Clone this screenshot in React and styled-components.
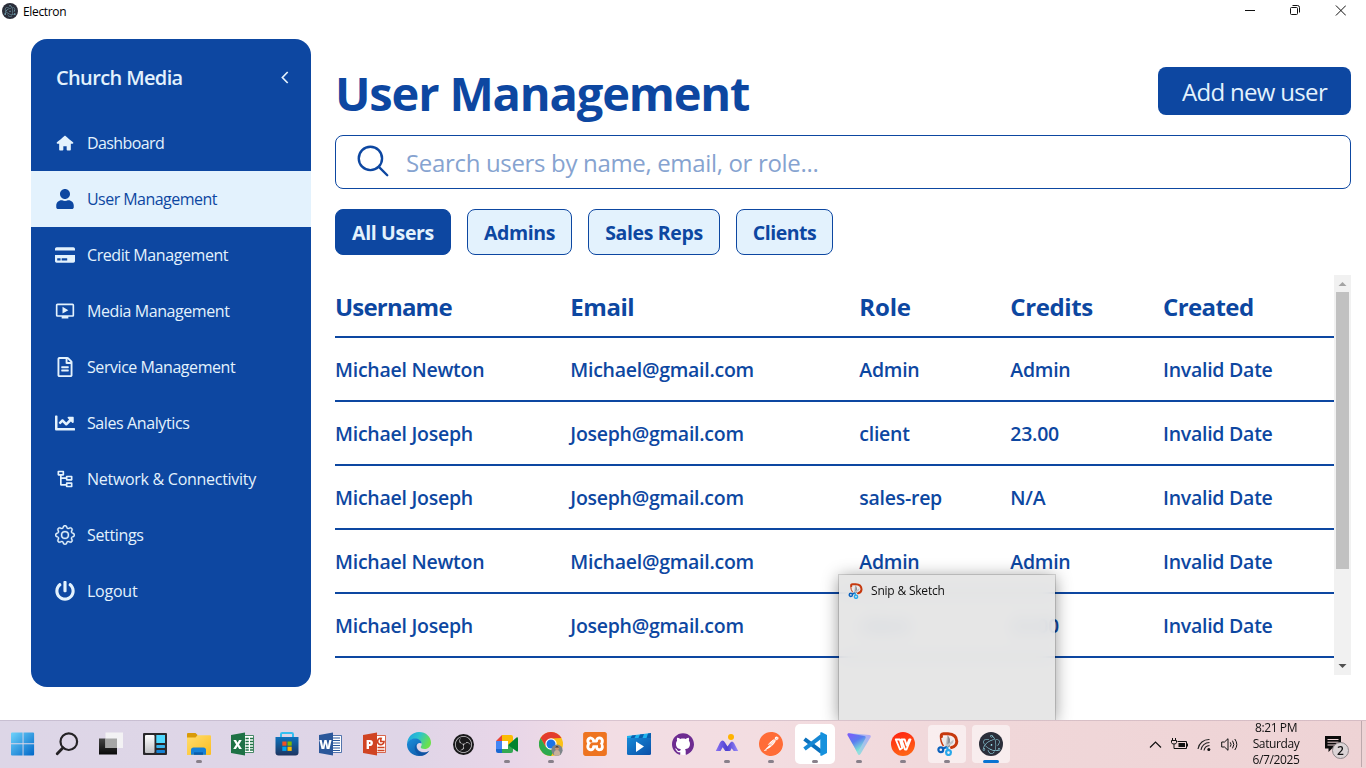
import React from "react";
import styled, { createGlobalStyle } from "styled-components";
import { TiHome } from "react-icons/ti";
import { FaUser, FaCreditCard, FaRegFileAlt, FaChartLine, FaPowerOff } from "react-icons/fa";
import { MdOndemandVideo } from "react-icons/md";
import { RiNodeTree } from "react-icons/ri";
import { BsGear } from "react-icons/bs";
import { IoSearchOutline } from "react-icons/io5";
import { SiObsstudio, SiGithub, SiPostman, SiElectron, SiXampp } from "react-icons/si";

const NAVY = "#0d47a1";
const PALE = "#e3f2fd";

const GlobalStyle = createGlobalStyle`
  * { box-sizing: border-box; }
  body {
    margin: 0;
    background: #fff;
    font-family: "Segoe UI", "Open Sans", "Noto Sans", sans-serif;
  }
  svg { display: block; flex: none; }
`;

const Desktop = styled.div`
  position: relative;
  display: flex;
  flex-direction: column;
  width: 1366px;
  height: 768px;
  overflow: hidden;
`;

/* Window title bar */
const TitleBar = styled.header`
  display: flex;
  align-items: flex-start;
  height: 39px;
  padding: 3px 20px 0 2px;
`;
const ElectronBadge = styled.span`
  display: flex;
  align-items: center;
  justify-content: center;
  width: ${(p) => p.$size}px;
  height: ${(p) => p.$size}px;
  border-radius: 50%;
  background: #2b2e3a;
  color: #9feaf9;
`;
const WindowTitle = styled.span`
  margin-left: 5px;
  font-size: 12px;
  line-height: 18px;
  letter-spacing: -0.35px;
  color: #000;
`;
const WindowControls = styled.div`
  display: flex;
  gap: 35px;
  margin: 2px 0 0 auto;
`;

const Body = styled.div`
  display: flex;
  height: 681px;
  padding: 0 15px 0 31px;
`;

/* Sidebar */
const Sidebar = styled.nav`
  flex: none;
  width: 280px;
  height: 648px;
  border-radius: 16px;
  background: ${NAVY};
  color: ${PALE};
`;
const Brand = styled.div`
  display: flex;
  align-items: center;
  justify-content: space-between;
  height: 77px;
  margin-bottom: -1px;
  padding: 0 19px 0 25px;
  font-size: 20px;
  font-weight: 600;
  letter-spacing: -0.63px;
`;
const MenuItem = styled.a`
  display: flex;
  align-items: center;
  gap: 12px;
  height: 56px;
  padding: 0 24px;
  font-size: 16px;
  white-space: nowrap;
  letter-spacing: ${(p) => p.$track}px;
  color: ${(p) => (p.$active ? NAVY : PALE)};
  background: ${(p) => (p.$active ? PALE : "transparent")};
  svg { width: 20px; height: 20px; }
`;
const GearIcon = styled(BsGear)`
  path { stroke: currentColor; stroke-width: 0.25px; }
`;

/* Main panel */
const Main = styled.main`
  flex: 1;
  min-width: 0;
  margin-left: 24px;
  padding-top: 28px;
  color: ${NAVY};
`;
const PageHeader = styled.div`
  display: flex;
  justify-content: space-between;
  height: 48px;
`;
const PageTitle = styled.h1`
  margin: 0;
  font-size: 47px;
  line-height: 53px;
  font-weight: 700;
  letter-spacing: -1.16px;
  white-space: nowrap;
`;
const PrimaryButton = styled.button`
  width: 193px;
  height: 48px;
  padding: 1px 0 0;
  border: 0;
  border-radius: 8px;
  background: ${NAVY};
  color: ${PALE};
  font: 400 24px/47px "Segoe UI", "Open Sans", sans-serif;
  letter-spacing: -0.68px;
`;
const SearchBox = styled.div`
  display: flex;
  align-items: center;
  height: 54px;
  margin-top: 20px;
  padding: 0 18px 2px;
  border: 1px solid ${NAVY};
  border-radius: 8px;
`;
const Placeholder = styled.span`
  margin: 3px 0 0 14px;
  font-size: 24px;
  line-height: 40px;
  letter-spacing: -0.33px;
  color: #86a3d0;
`;
const Filters = styled.div`
  display: flex;
  gap: 16px;
  margin-top: 20px;
`;
const FilterButton = styled.button`
  width: ${(p) => p.$width}px;
  height: 46px;
  padding: 2px 0 0;
  border: 1px solid ${NAVY};
  border-radius: 8px;
  background: ${(p) => (p.$active ? NAVY : PALE)};
  color: ${(p) => (p.$active ? PALE : NAVY)};
  font: 700 19.5px/42px "Segoe UI", "Open Sans", sans-serif;
  letter-spacing: ${(p) => p.$track}px;
`;
const TableArea = styled.div`
  display: flex;
  height: 400px;
  margin-top: 20px;
  overflow: hidden;
`;
const Table = styled.div`
  flex: 1;
`;
const Row = styled.div`
  display: grid;
  grid-template-columns: 235.3px 289px 151px 152.7px 1fr;
  align-items: center;
  height: 64px;
  border-bottom: 2px solid ${NAVY};
  font-size: 19.5px;
  font-weight: 600;
  letter-spacing: -0.26px;
  white-space: nowrap;
`;
const HeadRow = styled(Row)`
  height: 63px;
  padding-top: 2px;
  font-size: 24px;
  font-weight: 700;
`;
const HeadCell = styled.span`
  letter-spacing: ${(p) => p.$track}px;
`;
const ScrollTrack = styled.div`
  display: flex;
  flex-direction: column;
  align-items: center;
  width: 17px;
  background: #f1f1f1;
`;
const ScrollThumb = styled.div`
  width: 13px;
  height: 277px;
  background: #c1c1c1;
`;
const Spacer = styled.div`
  flex: 1;
`;

/* Window preview floating above the taskbar */
const Preview = styled.div`
  position: absolute;
  left: 839px;
  top: 575px;
  width: 216px;
  height: 145px;
  padding: 8px 8px;
  display: flex;
  align-items: flex-start;
  gap: 8px;
  background: rgba(227, 227, 227, 0.9);
  backdrop-filter: blur(8px);
  box-shadow: 0 0 0 1px rgba(0, 0, 0, 0.14), 0 2px 16px rgba(0, 0, 0, 0.42);
  font-size: 12px;
  line-height: 16px;
  letter-spacing: -0.2px;
  color: #111;
`;

/* Taskbar */
const Taskbar = styled.footer`
  position: relative;
  z-index: 1;
  display: flex;
  align-items: center;
  height: 48px;
  padding: 0 0 1px 3px;
  border-top: 1px solid rgba(120, 100, 130, 0.2);
  background: linear-gradient(90deg, #ddd6e7 0, #dfd5e7 400px, #e8d6e8 510px, #f2dde4 610px, #f3dde1 760px, #f0d7d9 1000px, #eed3d5 1366px);
`;
const Apps = styled.div`
  display: flex;
  gap: 4px;
`;
const AppSlot = styled.div`
  position: relative;
  display: flex;
  align-items: center;
  justify-content: center;
  width: 40px;
  height: 40px;
  border: ${(p) => (p.$box === "soft" ? "1px solid transparent" : "0")};
  border-radius: 5px;
  background: ${(p) => (p.$box === "solid" ? "#fff" : p.$box === "soft" ? "rgba(255,255,255,.55)" : "transparent")};
  background-clip: padding-box;
  &::after {
    content: "";
    display: ${(p) => (p.$mark ? "block" : "none")};
    position: absolute;
    bottom: ${(p) => (p.$box === "soft" ? 0 : 1)}px;
    width: ${(p) => (p.$mark === "current" ? 16 : 6)}px;
    height: 3px;
    border-radius: 2px;
    background: ${(p) => (p.$mark === "current" ? "#0873d2" : "#88808a")};
  }
`;
const Disc = styled.span`
  display: flex;
  align-items: center;
  justify-content: center;
  width: ${(p) => p.$size}px;
  height: ${(p) => p.$size}px;
  border-radius: ${(p) => p.$radius || "50%"};
  background: ${(p) => p.$bg};
  color: ${(p) => p.$fg};
`;
const Tray = styled.div`
  display: flex;
  align-items: center;
  height: 46px;
  margin-left: auto;
`;
const TrayIcons = styled.div`
  display: flex;
  align-items: center;
  gap: 9px;
`;
const Clock = styled.div`
  width: 60px;
  margin-left: 8px;
  text-align: center;
  font-size: 12px;
  line-height: 16px;
  letter-spacing: -0.4px;
  color: #111;
`;
const Notifications = styled.div`
  position: relative;
  width: 36px;
  height: 32px;
  margin-left: 19px;
  padding-top: 8px;
`;
const Count = styled.span`
  position: absolute;
  left: 7px;
  top: 14px;
  width: 17px;
  height: 17px;
  border: 1px solid #8d8588;
  border-radius: 50%;
  background: #dcd4d6;
  font-size: 12px;
  font-weight: 600;
  line-height: 15px;
  text-align: center;
  color: #111;
`;
const ShowDesktop = styled.div`
  width: 5px;
  height: 46px;
  border-left: 1px solid #bda9ad;
`;

const Svg = ({ size = 24, box = 24, children }) => (
  <svg width={size} height={size} viewBox={`0 0 ${box} ${box}`} fill="none">{children}</svg>
);

const StartIcon = () => (
  <Svg>
    <defs><linearGradient id="win" x1="0" y1="0" x2="1" y2="1"><stop stopColor="#6fd3fb" /><stop offset="1" stopColor="#0067c8" /></linearGradient></defs>
    <path fill="url(#win)" d="M1 .500h10.600v10.800H0V1.500a1 1 0 0 1 1-1zM12.500.500h9.600a1 1 0 0 1 1 1v9.800H12.500zM0 12.300h11.600v11.200H1a1 1 0 0 1-1-1zM12.500 12.300h10.600v10.200a1 1 0 0 1-1 1H12.500z" />
  </Svg>
);
const FindIcon = () => (
  <Svg>
    <circle cx="13.8" cy="9.7" r="8.3" stroke="#242225" strokeWidth="2.2" />
    <path d="M8 15.8 2.2 21.8" stroke="#242225" strokeWidth="2.8" strokeLinecap="round" />
  </Svg>
);
const TaskViewIcon = () => (
  <Svg>
    <defs><linearGradient id="tv" x1="0" y1="0" x2="0" y2="1"><stop stopColor="#454545" /><stop offset="1" stopColor="#080808" /></linearGradient></defs>
    <rect x="0" y="6.5" width="18" height="16" fill="url(#tv)" />
    <rect x="6.5" y=".5" width="17.5" height="15.5" fill="#f3f2f4" />
    <rect x="6.5" y="6.5" width="11.5" height="9.5" fill="#a6a6a6" />
  </Svg>
);
const WidgetsIcon = () => (
  <Svg>
    <defs><linearGradient id="wd" x1="0" y1="0" x2="0" y2="1"><stop stopColor="#fff" /><stop offset="1" stopColor="#c0c0c4" /></linearGradient></defs>
    <rect y="1" width="24" height="22" rx="1" fill="#29282b" />
    <rect x="2" y="3" width="9.5" height="18" rx="1" fill="url(#wd)" />
    <rect x="13.3" y="3" width="8.7" height="8" fill="#50d9ff" />
    <rect x="13.3" y="13" width="8.7" height="3" rx=".8" fill="#37b5ee" />
    <rect x="13.3" y="18" width="8.7" height="3" rx=".8" fill="#1683d4" />
  </Svg>
);
const FolderIcon = () => (
  <Svg>
    <defs><linearGradient id="fd" x1="0" y1="0" x2="1" y2="1"><stop stopColor="#ffdd6e" /><stop offset="1" stopColor="#fcbd20" /></linearGradient></defs>
    <path fill="#d99a08" d="M0 2q0-1 1-1h7.5l2 2v4H0z" />
    <path fill="url(#fd)" d="M0 5.5h8.5l2-2.3H23q1 0 1 1V22q0 1-1 1H0z" />
    <path fill="#1681d8" d="M4 22.8V18q0-2.5 2.5-2.5h10Q19 15.500 19 18v4.800z" />
    <path fill="#0a5cab" d="M7 22.8v-2.500h9v2.500z" />
  </Svg>
);
const OfficeIcon = ({ color, letter, children }) => (
  <Svg>
    <path fill="#fff" stroke={color} strokeWidth=".8" d="M11 3.500h11.500v17H11z" />
    {children}
    <path fill={color} d="M0 3 14 .500v23L0 21z" />
    <text x="6.500" y="16.500" fill="#fff" fontFamily="Open Sans, sans-serif" fontSize="12" fontWeight="800" textAnchor="middle">{letter}</text>
  </Svg>
);
const StoreIcon = () => (
  <Svg>
    <defs><linearGradient id="st" x1="0" y1="0" x2="0" y2="1"><stop stopColor="#0d72bd" /><stop offset="1" stopColor="#1e3560" /></linearGradient></defs>
    <path d="M6 6V2.200Q6 1 7.200 1h9.600Q18 1 18 2.200V6" stroke="#35bff0" strokeWidth="2" />
    <path fill="url(#st)" d="M.500 5h23v15.500q0 3-3 3h-17q-3 0-3-3z" />
    <path fill="#f25022" d="M7.300 9.500h4.200v4.200H7.300z" /><path fill="#7fba00" d="M12.500 9.500h4.200v4.200h-4.200z" />
    <path fill="#00a4ef" d="M7.300 14.700h4.200v4.200H7.300z" /><path fill="#ffb900" d="M12.500 14.700h4.200v4.200h-4.200z" />
  </Svg>
);
const EdgeIcon = () => (
  <Svg>
    <defs>
      <linearGradient id="eg" x1="0" y1="0" x2="1" y2=".4"><stop stopColor="#1f9de0" /><stop offset=".5" stopColor="#2bc3d0" /><stop offset="1" stopColor="#6be04c" /></linearGradient>
      <linearGradient id="eb" x1="0" y1="0" x2="1" y2="1"><stop stopColor="#1b8fdc" /><stop offset="1" stopColor="#0d4f9e" /></linearGradient>
    </defs>
    <path fill="url(#eg)" d="M0 11.500C.600 5 5.500 0 12 0c7 0 12 5 12 10.500 0 4-3 6.500-6.300 6.500-2.700 0-4.200-1-4-2 .1-.6 1-1.200 1-3 0-2.400-2.600-5-6.200-5C4.500 7 1.400 9 0 11.500z" />
    <path fill="url(#eb)" d="M0 12c.5-3 4-5.500 8-5.500 3.500 0 6.500 2 6.700 5C12 10 9.500 12 9.500 14.500c0 4 4.500 6.500 8.500 6 2-.3 3.500-1.200 4.300-1.800C20 22 16.500 24 12 24 5 24-.3 18.500 0 12z" />
    <path fill="#0c4d9d" opacity=".6" d="M9.500 11.500c-4 4-1 11.500 5 12.200 3.500-.4 6.200-2.500 7.800-5-5 3.500-14 1-12.800-7.200z" />
  </Svg>
);
const MeetIcon = () => (
  <Svg>
    <path fill="#ea4335" d="M1 9 7 3v6z" /><path fill="#4285f4" d="M1 9h6v8H1z" /><path fill="#1967d2" d="M1 17h6v4H3q-2 0-2-2z" />
    <path fill="#fff" d="M7 9h6v8H7z" />
    <path fill="#fbbc04" d="M7 3h9q2 0 2 2v4.500L13 13V9H7z" /><path fill="#34a853" d="M7 17h6v-4l5 2v4q0 2-2 2H7z" />
    <path fill="#00832d" d="m13 13 8.500-7.500q1.500-.8 1.500 1v12q0 1.800-1.500.8z" />
  </Svg>
);
const ChromeIcon = () => (
  <Svg>
    <circle cx="12" cy="12" r="12" fill="#fbc116" />
    <path fill="#e33b2e" d="M1.600 6A12 12 0 0 1 22.400 6L12 6.500 6.800 15z" />
    <path fill="#2da94f" d="M1.600 6A12 12 0 0 0 12 24l5.200-9H6.800z" />
    <circle cx="12" cy="12" r="5.700" fill="#fff" /><circle cx="12" cy="12" r="4.500" fill="#1a73e8" />
    <circle cx="18" cy="18.200" r="5.600" fill="#7d8589" />
    <circle cx="18" cy="16.200" r="2" fill="#c99572" /><path fill="#c8b09b" d="M14.800 22.500q0-4.500 3.200-4.500t3.200 4.500Q18 25 14.800 22.500z" /><path fill="#38312d" d="M16 15.500q2-3 4 0z" />
  </Svg>
);
const MoviesIcon = () => (
  <Svg>
    <defs><linearGradient id="mv" x1="0" y1="0" x2="1" y2="1"><stop stopColor="#1689d6" /><stop offset="1" stopColor="#0b4fa8" /></linearGradient></defs>
    <path fill="url(#mv)" d="M0 6h24v15.500q0 1.500-1.500 1.500h-21Q0 23 0 21.500z" />
    <path fill="#1fb2ee" d="M0 4 24 1v5H0z" /><path fill="#0a5fae" d="m5 3.400 4-.5L7.500 6h-4zM13 2.400l4-.5L15.500 6h-4zM21 1.400l3-.4v5h-4.500z" />
    <path fill="#fff" d="m9 9.500 8 5-8 5.500z" />
  </Svg>
);
const PeaksIcon = () => (
  <Svg>
    <defs><linearGradient id="pk" x1="0" y1="0" x2="1" y2="0"><stop stopColor="#8a73f2" /><stop offset=".5" stopColor="#4e3fd0" /><stop offset="1" stopColor="#9a8bfa" /></linearGradient></defs>
    <path fill="url(#pk)" d="M.800 19 5 10.500Q7.500 6.500 10 10.500l2.500 4L15 11q2-3 4 0l4.200 8h-4.500l-2-2.800-1.500 2.800h-5l-2.500-3.800L5.500 19z" />
    <circle cx="16" cy="5" r="3" fill="#ffb300" />
  </Svg>
);
const CodeIcon = () => (
  <Svg>
    <path stroke="#0a70bd" strokeWidth="4" strokeLinejoin="round" d="M1.500 7 18.500 19.800" /><path stroke="#1687d4" strokeWidth="4" d="M1.500 17 18.500 4.200" />
    <path fill="#1691dd" d="M17.300.500q.7-.6 1.500-.2L24 3v18l-5.200 2.700q-.8.400-1.500-.2z" />
  </Svg>
);
const ProtonIcon = () => (
  <Svg>
    <defs>
      <linearGradient id="pv" x1="0" y1="0" x2=".6" y2="1"><stop stopColor="#8457fb" /><stop offset=".5" stopColor="#5a7cf0" /><stop offset="1" stopColor="#7ff0d3" /></linearGradient>
      <linearGradient id="pw" x1="1" y1="0" x2="0" y2="1"><stop stopColor="#b5a2f8" /><stop offset="1" stopColor="#8af2d5" /></linearGradient>
    </defs>
    <path fill="url(#pw)" d="M1 1 22.500 3q2 .3 1 2.200L13.500 22q-1.500 2-2.700 0z" />
    <path fill="url(#pv)" d="M2 1.200 17.500 4q2 .5 1 2.200L11.500 19Q10.500 20.500 9.500 19L.400 3Q0 1 2 1.200z" />
  </Svg>
);
const WpsIcon = () => (
  <Svg>
    <defs><linearGradient id="wp" x1="0" y1="0" x2=".3" y2="1"><stop stopColor="#ff1f10" /><stop offset="1" stopColor="#ff6216" /></linearGradient></defs>
    <circle cx="12" cy="12" r="12" fill="url(#wp)" />
    <path stroke="#fff" strokeWidth="1.900" strokeLinejoin="round" d="M4.800 7.500h4l2.500 8.500-2.300 1.500zM10.500 7.500h3.200l2 6 2.500-6h1.300l-4 10h-1.500z" />
  </Svg>
);
const SnipIcon = ({ size }) => (
  <Svg size={size}>
    <path fill="#eceaea" d="M8 5h8q4 3 3 7l-3 4H9L6.500 9z" />
    <path stroke="#c6390e" strokeWidth="3" strokeLinecap="round" d="M6.500 4.500Q5.500 2 8.500 1.800H13Q21.500 2 21.800 9.500 21.500 14.500 16.500 15.500" />
    <path stroke="#c6390e" strokeWidth="1.500" d="M5.500 4q0 6 3 10" />
    <path fill="#8d9096" d="M12.500 2.500 15 7v7.500l-3 1.500z" /><path fill="#c0c3c8" d="M18.800 7.500 18 11l-7.500 5-1-1.500zM12.500 2.500 12 16l-1.500-3z" />
    <circle cx="5.800" cy="17.800" r="2.400" stroke="#0b62bd" strokeWidth="2.200" /><circle cx="13.500" cy="20.600" r="2.400" stroke="#28a8ea" strokeWidth="2.200" />
    <path stroke="#0b62bd" strokeWidth="2.200" d="m8 16.500 4-1.500" /><path stroke="#28a8ea" strokeWidth="2.200" d="m12.800 18-.8-3" />
  </Svg>
);
const excelGrid = <path stroke="#217346" strokeWidth="1.700" strokeDasharray="3.300 1.200" d="M14.500 6.500h8M14.500 9.500h8M14.500 12.500h8M14.500 15.500h8M14.500 18h8" />;
const wordLines = <path stroke="#2b579a" strokeWidth="1.200" d="M14 6h7M14 8.500h7M14 11h7M14 13.500h7M14 16h7M14 18.500h7" />;
const pptChart = <path stroke="#d04423" strokeWidth="1.700" d="M19 6.500a3.200 3.200 0 1 0 2 3h-3.200V6.300M14.500 15.500h7M14.500 18.500h7" />;

const apps = [
  { id: "start", icon: <StartIcon /> },
  { id: "find", icon: <FindIcon /> },
  { id: "task-view", icon: <TaskViewIcon /> },
  { id: "widgets", icon: <WidgetsIcon /> },
  { id: "explorer", icon: <FolderIcon />, mark: "open" },
  { id: "excel", icon: <OfficeIcon color="#1e7145" letter="X">{excelGrid}</OfficeIcon> },
  { id: "store", icon: <StoreIcon /> },
  { id: "word", icon: <OfficeIcon color="#2b579a" letter="W">{wordLines}</OfficeIcon> },
  { id: "powerpoint", icon: <OfficeIcon color="#d04423" letter="P">{pptChart}</OfficeIcon> },
  { id: "edge", icon: <EdgeIcon /> },
  { id: "obs", icon: <Disc $size={21} $bg="#1a191b" $fg="#c9c7ca"><SiObsstudio size={17} /></Disc> },
  { id: "meet", icon: <MeetIcon />, mark: "open" },
  { id: "chrome", icon: <ChromeIcon />, mark: "open" },
  { id: "xampp", icon: <Disc $size={23} $radius="4px" $bg="#fff" $fg="#ee7420"><SiXampp size={24} /></Disc> },
  { id: "movies", icon: <MoviesIcon /> },
  { id: "github", icon: <Disc $size={21} $bg="#fff" $fg="#6e2c91"><SiGithub size={22} /></Disc> },
  { id: "peaks", icon: <PeaksIcon />, mark: "open" },
  { id: "postman", icon: <Disc $size={23} $bg="#fff" $fg="#ff6c37"><SiPostman size={24} /></Disc>, mark: "open" },
  { id: "code", icon: <CodeIcon />, mark: "open", box: "solid" },
  { id: "proton", icon: <ProtonIcon />, mark: "open" },
  { id: "wps", icon: <WpsIcon />, mark: "open" },
  { id: "snip", icon: <SnipIcon size={24} />, mark: "open", box: "soft" },
  { id: "electron", icon: <ElectronBadge $size={24}><SiElectron size={19} /></ElectronBadge>, mark: "current", box: "soft" },
];

const menu = [
  { label: "Dashboard", icon: TiHome, track: -0.6 },
  { label: "User Management", icon: FaUser, track: -0.54, active: true },
  { label: "Credit Management", icon: FaCreditCard, track: -0.42 },
  { label: "Media Management", icon: MdOndemandVideo, track: -0.42 },
  { label: "Service Management", icon: FaRegFileAlt, track: -0.44 },
  { label: "Sales Analytics", icon: FaChartLine, track: -0.4 },
  { label: "Network & Connectivity", icon: RiNodeTree, track: -0.28 },
  { label: "Settings", icon: GearIcon, track: -0.34 },
  { label: "Logout", icon: FaPowerOff, track: -0.24 },
];

const filters = [
  { label: "All Users", width: 116, track: -0.33, active: true },
  { label: "Admins", width: 105, track: -0.42 },
  { label: "Sales Reps", width: 132, track: -0.36 },
  { label: "Clients", width: 97, track: -0.5 },
];

const columns = [
  { label: "Username", track: -0.8 },
  { label: "Email", track: -0.45 },
  { label: "Role", track: -0.15 },
  { label: "Credits", track: -0.4 },
  { label: "Created", track: -0.58 },
];

const newton = ["Michael Newton", "Michael@gmail.com", "Admin", "Admin", "Invalid Date"];
const joseph = (role, credits) => ["Michael Joseph", "Joseph@gmail.com", role, credits, "Invalid Date"];
const rows = [newton, joseph("client", "23.00"), joseph("sales-rep", "N/A"), newton, joseph("client", "23.00")];

export default function App() {
  return (
    <Desktop>
      <GlobalStyle />
      <TitleBar>
        <ElectronBadge $size={16}><SiElectron size={12} /></ElectronBadge>
        <WindowTitle>Electron</WindowTitle>
        <WindowControls>
          <Svg size={10} box={10}><path d="M0 5.500h10" stroke="#111" /></Svg>
          <Svg size={10} box={10}><rect x=".5" y="2.500" width="7" height="7" rx="1" stroke="#111" /><path d="M2.500.500H7.500q2 0 2 2V7.500" stroke="#111" /></Svg>
          <Svg size={11} box={11}><path d="m.9.500 10 10m0-10-10 10" stroke="#111" /></Svg>
        </WindowControls>
      </TitleBar>
      <Body>
        <Sidebar>
          <Brand>
            Church Media
            <Svg size={14} box={14}><path d="M9.700 1 4.400 6.500l5.300 5.500" stroke={PALE} strokeWidth="1.700" /></Svg>
          </Brand>
          {menu.map(({ label, icon: Icon, track, active }) => (
            <MenuItem key={label} $active={active} $track={track}>
              <Icon />
              <span>{label}</span>
            </MenuItem>
          ))}
        </Sidebar>
        <Main>
          <PageHeader>
            <PageTitle>User Management</PageTitle>
            <PrimaryButton>Add new user</PrimaryButton>
          </PageHeader>
          <SearchBox>
            <IoSearchOutline size={38} />
            <Placeholder>Search users by name, email, or role...</Placeholder>
          </SearchBox>
          <Filters>
            {filters.map((f) => (
              <FilterButton key={f.label} $width={f.width} $track={f.track} $active={f.active}>{f.label}</FilterButton>
            ))}
          </Filters>
          <TableArea>
            <Table>
              <HeadRow>
                {columns.map((c) => <HeadCell key={c.label} $track={c.track}>{c.label}</HeadCell>)}
              </HeadRow>
              {rows.map((cells, r) => (
                <Row key={r}>{cells.map((c, i) => <span key={i}>{c}</span>)}</Row>
              ))}
            </Table>
            <ScrollTrack>
              <Svg size={17} box={17}><path d="m8.500 7 4 4h-8z" fill="#a3a3a3" /></Svg>
              <ScrollThumb />
              <Spacer />
              <Svg size={17} box={17}><path d="m8.500 10 4-4h-8z" fill="#505050" /></Svg>
            </ScrollTrack>
          </TableArea>
        </Main>
      </Body>
      <Preview>
        <SnipIcon size={16} />
        Snip &amp; Sketch
      </Preview>
      <Taskbar>
        <Apps>
          {apps.map((a) => <AppSlot key={a.id} $mark={a.mark} $box={a.box}>{a.icon}</AppSlot>)}
        </Apps>
        <Tray>
          <TrayIcons>
            <Svg size={13} box={13}><path d="m1 9.500 5.500-5.500 5.500 5.500" stroke="#111" strokeWidth="1.200" /></Svg>
            <Svg size={17} box={17}>
              <path d="M6.500 5.500h9v7h-10" stroke="#111" /><path fill="#111" d="M7.500 7h6.500v4H7.500zM16 7.500h1v3h-1z" />
              <path d="M1.500 2v2m3-2v2M.500 4.500h5v2q0 1.500-2.500 1.500T.500 6.500zM3 8v4.500h3" stroke="#111" />
            </Svg>
            <Svg size={15} box={15}>
              <path d="M1 12A11 11 0 0 1 12.500 2.500M4 13A8.500 8.500 0 0 1 12.500 5.500M7 13.500A6 6 0 0 1 12.500 8.500" stroke="#222" strokeWidth="1.100" />
              <circle cx="11.800" cy="12.500" r="1.500" fill="#111" />
            </Svg>
            <Svg size={17} box={17}>
              <path d="M.700 6v5h2.800L7 14.300V2.700L3.500 6z" stroke="#111" /><path d="M9.300 6.300q1.500 2.200 0 4.400M11.500 4.700q2.700 3.800 0 7.600M13.800 3q4 5.500 0 11" stroke="#111" />
            </Svg>
          </TrayIcons>
          <Clock>
            <div>8:21 PM</div>
            <div>Saturday</div>
            <div>6/7/2025</div>
          </Clock>
          <Notifications>
            <Svg size={17} box={17}>
              <path fill="#0b0b0b" d="M0 0h16v12.500H7L3.500 16v-3.500H0z" /><path d="M2.500 3.500h11M2.500 6.200h11M2.500 9h11" stroke="#eed3d5" />
            </Svg>
            <Count>2</Count>
          </Notifications>
          <ShowDesktop />
        </Tray>
      </Taskbar>
    </Desktop>
  );
}
